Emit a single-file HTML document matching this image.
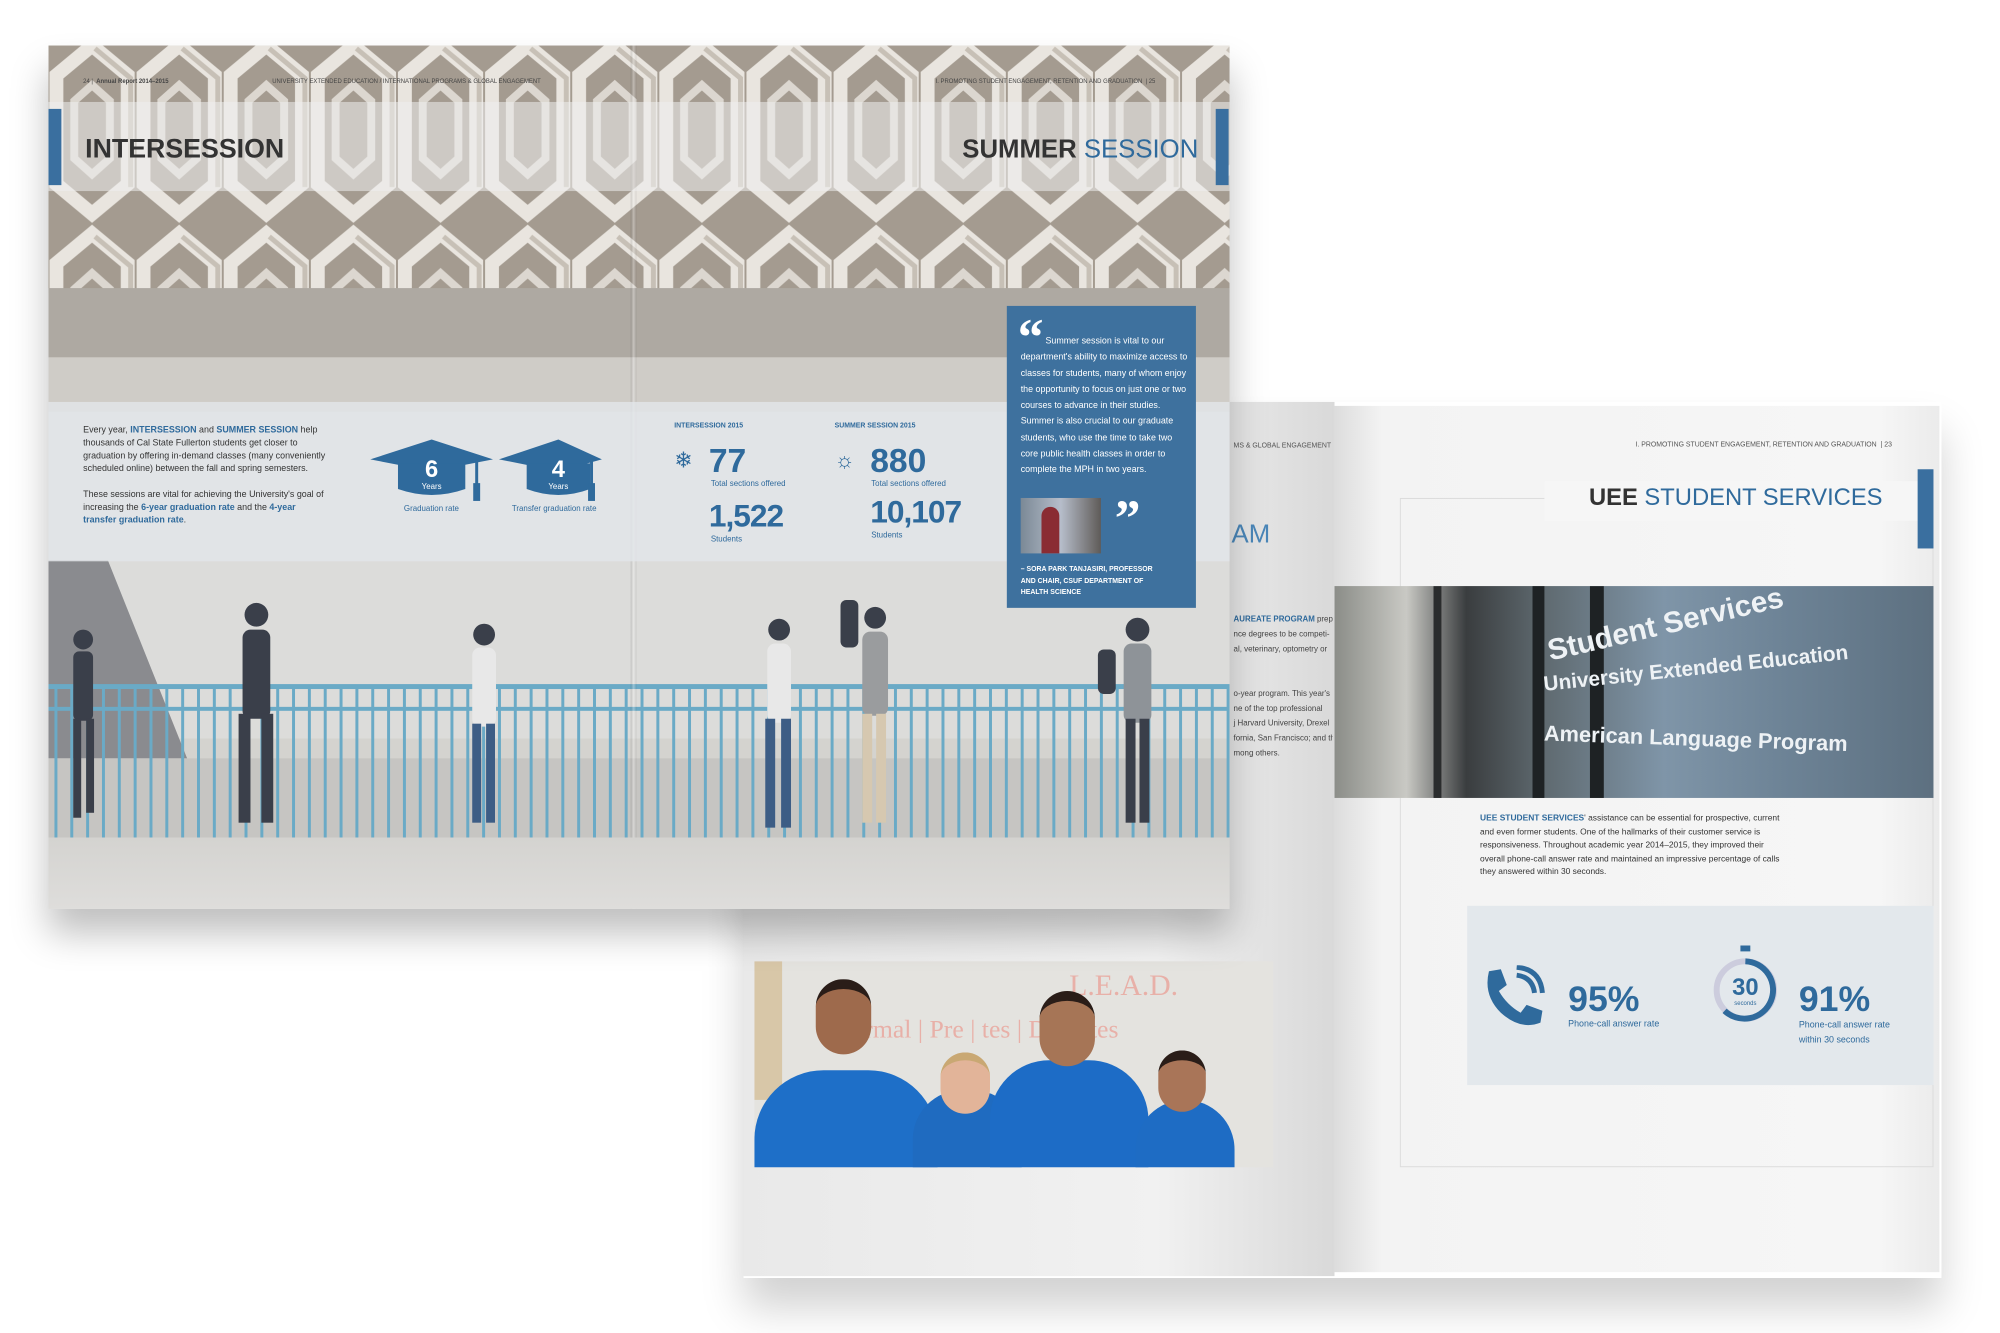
<!DOCTYPE html>
<html><head><meta charset="utf-8"><style>
*{margin:0;padding:0;box-sizing:border-box}
body{width:2000px;height:1333px;background:#fff;position:relative;overflow:hidden;font-family:"Liberation Sans",sans-serif}
#w{position:absolute;left:0;top:0;width:2000px;height:1333px;transform:scale(0.99);transform-origin:0 0}
.a{position:absolute}
.cond{font-family:"Liberation Sans Narrow","Liberation Sans",sans-serif}
.blue{color:#2f6a9c}
</style></head><body><div id="w">

<!-- second book (behind) -->
<div class="a" style="left:751px;top:406px;width:1210px;height:885px;box-shadow:0 30px 40px rgba(0,0,0,.18)"></div>
<div class="a" style="left:751px;top:406px;width:597px;height:883px;background:linear-gradient(90deg,#e9e9e9,#f1f1f1 70%,#d9d9d9 100%)"></div>
<div class="a" style="left:1347px;top:410px;width:612px;height:875px;background:linear-gradient(90deg,#dcdcdc,#f3f3f3 8%,#f6f6f6 90%,#ebebeb)"></div>
<div class="a" style="left:1414px;top:503px;width:539px;height:676px;border:1px solid #dcdcdc"></div>
<div class="a cond" style="left:1246px;top:447px;font-size:7px;color:#555">MS &amp; GLOBAL ENGAGEMENT</div>
<div class="a" style="left:1244px;top:524px;font-size:26px;color:#4a86b8">AM</div>
<div class="a cond" style="left:1246px;top:618px;font-size:8px;line-height:15px;color:#444;width:100px;overflow:hidden;white-space:nowrap"><b class="blue">AUREATE PROGRAM</b> prepares<br>nce degrees to be competi-<br>al, veterinary, optometry or<br><br><br>o-year program. This year's<br>ne of the top professional<br>j Harvard University, Drexel<br>fornia, San Francisco; and the<br>mong others.</div>
<!-- team photo -->
<div class="a" style="left:762px;top:971px;width:524px;height:208px;background:#e4e3df;overflow:hidden">
<div class="a" style="left:0;top:0;width:28px;height:140px;background:#d8c7a8"></div>
<div class="a" style="left:318px;top:8px;font-size:30px;color:#e8b0a8;font-family:'Liberation Serif',serif">L.E.A.D.</div>
<div class="a" style="left:98px;top:54px;font-size:26px;color:#e8b0a8;font-family:'Liberation Serif',serif">ormal | Pre | tes | Diabetes</div>
<div class="a" style="left:0;top:110px;width:185px;height:110px;background:#1e6fc8;border-radius:70px 70px 0 0"></div>
<div class="a" style="left:62px;top:18px;width:56px;height:76px;background:#9e6a4c;border-radius:28px;border-top:10px solid #2a1d18"></div>
<div class="a" style="left:160px;top:130px;width:110px;height:90px;background:#1f6bc0;border-radius:50px 50px 0 0"></div>
<div class="a" style="left:188px;top:92px;width:50px;height:62px;background:#e2b499;border-radius:25px;border-top:8px solid #c9a873"></div>
<div class="a" style="left:238px;top:100px;width:160px;height:120px;background:#1d6cc6;border-radius:60px 60px 0 0"></div>
<div class="a" style="left:288px;top:30px;width:56px;height:76px;background:#a67556;border-radius:28px;border-top:10px solid #2a1d18"></div>
<div class="a" style="left:385px;top:140px;width:100px;height:80px;background:#1e6cc4;border-radius:50px 50px 0 0"></div>
<div class="a" style="left:408px;top:90px;width:48px;height:62px;background:#a97558;border-radius:24px;border-top:10px solid #2a1d18"></div>
</div>
<!-- right page content -->
<div class="a cond" style="left:1652px;top:446px;font-size:7px;color:#555;white-space:nowrap">I. PROMOTING STUDENT ENGAGEMENT, RETENTION AND GRADUATION &nbsp;| 23</div>
<div class="a" style="left:1560px;top:486px;width:380px;height:40px;background:#f6f6f6"></div>
<div class="a" style="left:1605px;top:489px;font-size:24px;color:#333;white-space:nowrap"><b>UEE</b> <span style="color:#2f6a9c">STUDENT SERVICES</span></div>
<div class="a" style="left:1937px;top:474px;width:16px;height:80px;background:#3a6f9f"></div>
<div class="a" style="left:1348px;top:592px;width:605px;height:214px;overflow:hidden;background:linear-gradient(90deg,#8b8d88 0%,#c9c9c4 12%,#3a3d3f 22%,#5f6a70 35%,#7f95a8 55%,#6d8396 75%,#5d7080 100%)">
<div class="a" style="left:100px;top:0;width:8px;height:214px;background:#2a2c2d"></div>
<div class="a" style="left:200px;top:0;width:12px;height:214px;background:#1e2224"></div>
<div class="a" style="left:258px;top:0;width:14px;height:214px;background:#1e2224"></div>
<div class="a cond" style="left:212px;top:50px;font-size:30px;font-weight:bold;color:#eef2f5;transform:rotate(-13deg);transform-origin:left top;white-space:nowrap">Student Services</div>
<div class="a cond" style="left:210px;top:88px;font-size:21px;font-weight:bold;color:#eef2f5;transform:rotate(-6deg);transform-origin:left top;white-space:nowrap">University Extended Education</div>
<div class="a cond" style="left:212px;top:136px;font-size:22px;font-weight:bold;color:#eef2f5;transform:rotate(2deg);transform-origin:left top;white-space:nowrap">American Language Program</div>
</div>
<div class="a cond" style="left:1495px;top:820px;font-size:8.5px;line-height:13.5px;color:#333;width:310px"><b class="blue">UEE STUDENT SERVICES</b>' assistance can be essential for prospective, current and even former students. One of the hallmarks of their customer service is responsiveness. Throughout academic year 2014–2015, they improved their overall phone-call answer rate and maintained an impressive percentage of calls they answered within 30 seconds.</div>
<div class="a" style="left:1482px;top:915px;width:471px;height:181px;background:#e3e8ec"></div>
<svg class="a" style="left:1496px;top:975px" width="66" height="66" viewBox="0 0 66 66"><path d="M8 6 L20 4 L26 20 L18 26 Q26 40 40 48 L46 40 L62 46 L60 58 Q40 66 20 48 Q2 30 8 6Z" fill="#2f6a9c"/><path d="M36 10 Q52 12 54 28" stroke="#2f6a9c" stroke-width="5" fill="none"/><path d="M36 2 Q60 4 62 28" stroke="#2f6a9c" stroke-width="5" fill="none"/></svg>
<div class="a cond" style="left:1584px;top:988px;font-size:36px;font-weight:bold;color:#2f6a9c">95%</div>
<div class="a cond" style="left:1584px;top:1029px;font-size:9px;color:#2f6a9c">Phone-call answer rate</div>
<svg class="a" style="left:1728px;top:955px" width="70" height="82" viewBox="0 0 70 82"><rect x="30" y="0" width="10" height="6" fill="#2f6a9c"/><circle cx="35" cy="45" r="29" fill="none" stroke="#ccd" stroke-width="6"/><path d="M35 16 A29 29 0 1 1 14 66" fill="none" stroke="#2f6a9c" stroke-width="6"/><text x="35" y="50" text-anchor="middle" font-size="24" font-weight="bold" fill="#2f6a9c" font-family="Liberation Sans">30</text><text x="35" y="60" text-anchor="middle" font-size="6" fill="#2f6a9c" font-family="Liberation Sans">seconds</text></svg>
<div class="a cond" style="left:1817px;top:988px;font-size:36px;font-weight:bold;color:#2f6a9c">91%</div>
<div class="a cond" style="left:1817px;top:1028px;font-size:9px;line-height:15px;color:#2f6a9c">Phone-call answer rate<br>within 30 seconds</div>

<!-- top book -->
<div class="a" style="left:49px;top:46px;width:1193px;height:872px;box-shadow:0 25px 35px rgba(0,0,0,.25)"></div>
<div class="a" style="left:49px;top:46px;width:1193px;height:872px;background:#d9d8d5"></div>
<svg class="a" style="left:49px;top:46px" width="1193" height="800" viewBox="0 0 1193 800">
<defs>
<pattern id="hx" width="88" height="190" patternUnits="userSpaceOnUse" x="0" y="-10">
<rect width="88" height="190" fill="#a49b90"/>
<path d="M44 10 L80 40 L80 150 L44 180 L8 150 L8 40Z" fill="none" stroke="#e9e5df" stroke-width="14"/>
<path d="M44 10 L80 40 L80 150" fill="none" stroke="#c7c0b6" stroke-width="5" transform="translate(3,3)"/>
<path d="M44 50 L62 66 L62 124 L44 140 L26 124 L26 66Z" fill="none" stroke="#dcd7d0" stroke-width="8"/>
</pattern>
<pattern id="rl" width="16" height="200" patternUnits="userSpaceOnUse"><rect x="6" y="0" width="3" height="200" fill="#6aaac6"/></pattern>
</defs>
<rect width="1193" height="800" fill="#d4d3cf"/>
<rect y="0" width="1193" height="250" fill="url(#hx)"/>
<rect y="245" width="1193" height="70" fill="#aea9a2"/>
<rect y="315" width="1193" height="55" fill="#cfccc7"/>
<rect y="370" width="1193" height="330" fill="#dcdcda"/>
<path d="M0 520 L60 520 L140 720 L0 720Z" fill="#8a8b8f"/>
<rect y="720" width="1193" height="80" fill="#c6c5c2"/>
<rect y="648" width="1193" height="152" fill="url(#rl)"/>
<rect y="645" width="1193" height="5" fill="#6aaac6"/>
<rect y="668" width="1193" height="4" fill="#6aaac6"/>
<g fill="#3a3f4a">
<circle cx="35" cy="600" r="10"/><rect x="25" y="612" width="20" height="70" rx="6"/><rect x="25" y="680" width="8" height="100"/><rect x="38" y="680" width="8" height="95"/>
<circle cx="210" cy="575" r="12"/><rect x="196" y="590" width="28" height="90" rx="8"/><rect x="192" y="675" width="12" height="110"/><rect x="215" y="675" width="12" height="110"/>
<circle cx="440" cy="595" r="11"/><rect x="428" y="608" width="24" height="80" rx="8" fill="#e8e8e8"/><rect x="428" y="685" width="9" height="100" fill="#3d5d85"/><rect x="442" y="685" width="9" height="100" fill="#3d5d85"/>
<circle cx="738" cy="590" r="11"/><rect x="726" y="604" width="24" height="80" rx="8" fill="#e8e8e8"/><rect x="724" y="680" width="10" height="110" fill="#3d5d85"/><rect x="740" y="680" width="10" height="110" fill="#3d5d85"/>
<circle cx="835" cy="578" r="11"/><rect x="822" y="592" width="26" height="85" rx="8" fill="#9a9c9e"/><rect x="822" y="675" width="10" height="110" fill="#d6c8b0"/><rect x="836" y="675" width="10" height="110" fill="#d6c8b0"/>
<circle cx="1100" cy="590" r="12"/><rect x="1086" y="604" width="28" height="80" rx="8" fill="#8e9398"/><rect x="1088" y="680" width="10" height="105"/><rect x="1102" y="680" width="10" height="105"/>
<rect x="800" y="560" width="18" height="48" rx="6"/><rect x="1060" y="610" width="18" height="45" rx="6"/></g>
</svg>
<div class="a" style="left:637px;top:46px;width:6px;height:872px;background:linear-gradient(90deg,rgba(0,0,0,.12),rgba(255,255,255,.3),rgba(0,0,0,.08))"></div>
<div class="a" style="left:49px;top:846px;width:1193px;height:72px;background:linear-gradient(#d4d3d0,#dedddb)"></div>
<div class="a" style="left:49px;top:103px;width:1193px;height:90px;background:rgba(238,238,238,.55)"></div>
<div class="a" style="left:49px;top:110px;width:13px;height:77px;background:#3a6f9f"></div>
<div class="a" style="left:1228px;top:110px;width:13px;height:77px;background:#3a6f9f"></div>
<div class="a" style="left:86px;top:135px;font-size:27px;font-weight:bold;color:#333">INTERSESSION</div>
<div class="a" style="left:972px;top:135px;width:238px;text-align:right;font-size:26px;color:#333;white-space:nowrap"><b>SUMMER</b> <span style="color:#2f6a9c">SESSION</span></div>
<div class="a cond" style="left:84px;top:80px;font-size:6px;color:#444;white-space:nowrap">24 | &nbsp;<b>Annual Report 2014–2015</b></div>
<div class="a cond" style="left:275px;top:80px;font-size:6px;color:#444;white-space:nowrap">UNIVERSITY EXTENDED EDUCATION / INTERNATIONAL PROGRAMS &amp; GLOBAL ENGAGEMENT</div>
<div class="a cond" style="left:945px;top:80px;font-size:6px;color:#444;white-space:nowrap">I. PROMOTING STUDENT ENGAGEMENT, RETENTION AND GRADUATION &nbsp;| 25</div>
<div class="a" style="left:49px;top:406px;width:1193px;height:161px;background:rgba(226,229,233,.82)"></div>
<div class="a cond" style="left:84px;top:428px;width:245px;font-size:9px;line-height:13px;color:#333">Every year, <b class="blue">INTERSESSION</b> and <b class="blue">SUMMER SESSION</b> help thousands of Cal State Fullerton students get closer to graduation by offering in-demand classes (many conveniently scheduled online) between the fall and spring semesters.<br><br>These sessions are vital for achieving the University's goal of increasing the <b class="blue">6-year graduation rate</b> and the <b class="blue">4-year transfer graduation rate</b>.</div>
<svg class="a" style="left:374px;top:442px" width="240" height="66" viewBox="0 0 240 66">
<g fill="#2f6a9c"><path d="M0 22 L62 2 L124 22 L62 34Z"/><path d="M28 26 L96 26 L96 52 Q62 64 28 52Z"/><rect x="106" y="22" width="3" height="30"/><rect x="104" y="46" width="7" height="18"/>
<path d="M130 22 L190 2 L234 22 L190 34Z"/><path d="M158 26 L222 26 L222 52 Q190 64 158 52Z"/><rect x="222" y="22" width="3" height="30"/><rect x="220" y="46" width="7" height="18"/></g>
<text x="62" y="40" text-anchor="middle" font-size="24" font-weight="bold" fill="#fff" font-family="Liberation Sans">6</text>
<text x="62" y="52" text-anchor="middle" font-size="8" fill="#fff" font-family="Liberation Sans">Years</text>
<text x="190" y="40" text-anchor="middle" font-size="24" font-weight="bold" fill="#fff" font-family="Liberation Sans">4</text>
<text x="190" y="52" text-anchor="middle" font-size="8" fill="#fff" font-family="Liberation Sans">Years</text></svg>
<div class="a cond" style="left:408px;top:509px;font-size:8px;color:#2f6a9c">Graduation rate</div>
<div class="a cond" style="left:517px;top:509px;font-size:8px;color:#2f6a9c">Transfer graduation rate</div>
<div class="a cond" style="left:681px;top:427px;font-size:7px;font-weight:bold;color:#2f6a9c">INTERSESSION 2015</div>
<div class="a cond" style="left:843px;top:427px;font-size:7px;font-weight:bold;color:#2f6a9c">SUMMER SESSION 2015</div>
<div class="a" style="left:681px;top:452px;font-size:22px;color:#2f6a9c">❄</div>
<div class="a" style="left:843px;top:452px;font-size:22px;color:#2f6a9c">☼</div>
<div class="a cond" style="left:716px;top:447px;font-size:34px;font-weight:bold;color:#2f6a9c">77</div>
<div class="a cond" style="left:879px;top:447px;font-size:34px;font-weight:bold;color:#2f6a9c">880</div>
<div class="a cond" style="left:718px;top:484px;font-size:8px;color:#2f6a9c">Total sections offered</div>
<div class="a cond" style="left:880px;top:484px;font-size:8px;color:#2f6a9c">Total sections offered</div>
<div class="a cond" style="left:716px;top:503px;font-size:32px;font-weight:bold;color:#2f6a9c;letter-spacing:-1px">1,522</div>
<div class="a cond" style="left:879px;top:499px;font-size:32px;font-weight:bold;color:#2f6a9c;letter-spacing:-1px">10,107</div>
<div class="a cond" style="left:718px;top:540px;font-size:8px;color:#2f6a9c">Students</div>
<div class="a cond" style="left:880px;top:536px;font-size:8px;color:#2f6a9c">Students</div>
<div class="a" style="left:1017px;top:309px;width:191px;height:305px;background:#3e719e"></div>
<div class="a" style="left:1028px;top:312px;font-size:52px;font-weight:bold;color:#fff;font-family:'Liberation Serif',serif">“</div>
<div class="a cond" style="left:1031px;top:336px;width:172px;font-size:9px;line-height:16.3px;color:#fff">&nbsp;&nbsp;&nbsp;&nbsp;&nbsp;&nbsp;&nbsp;&nbsp;&nbsp;&nbsp;Summer session is vital to our department's ability to maximize access to classes for students, many of whom enjoy the opportunity to focus on just one or two courses to advance in their studies. Summer is also crucial to our graduate students, who use the time to take two core public health classes in order to complete the MPH in two years.</div>
<div class="a" style="left:1031px;top:503px;width:81px;height:56px;background:linear-gradient(90deg,#7b8996,#b6bdca 50%,#5f5b58)"></div>
<div class="a" style="left:1052px;top:512px;width:18px;height:47px;background:#8a2c33;border-radius:9px 9px 0 0"></div>
<div class="a" style="left:1126px;top:495px;font-size:52px;font-weight:bold;color:#fff;font-family:'Liberation Serif',serif">”</div>
<div class="a cond" style="left:1031px;top:570px;font-size:7px;line-height:11.5px;font-weight:bold;color:#fff">– SORA PARK TANJASIRI, PROFESSOR<br>AND CHAIR, CSUF DEPARTMENT OF<br>HEALTH SCIENCE</div>
</div></body></html>
